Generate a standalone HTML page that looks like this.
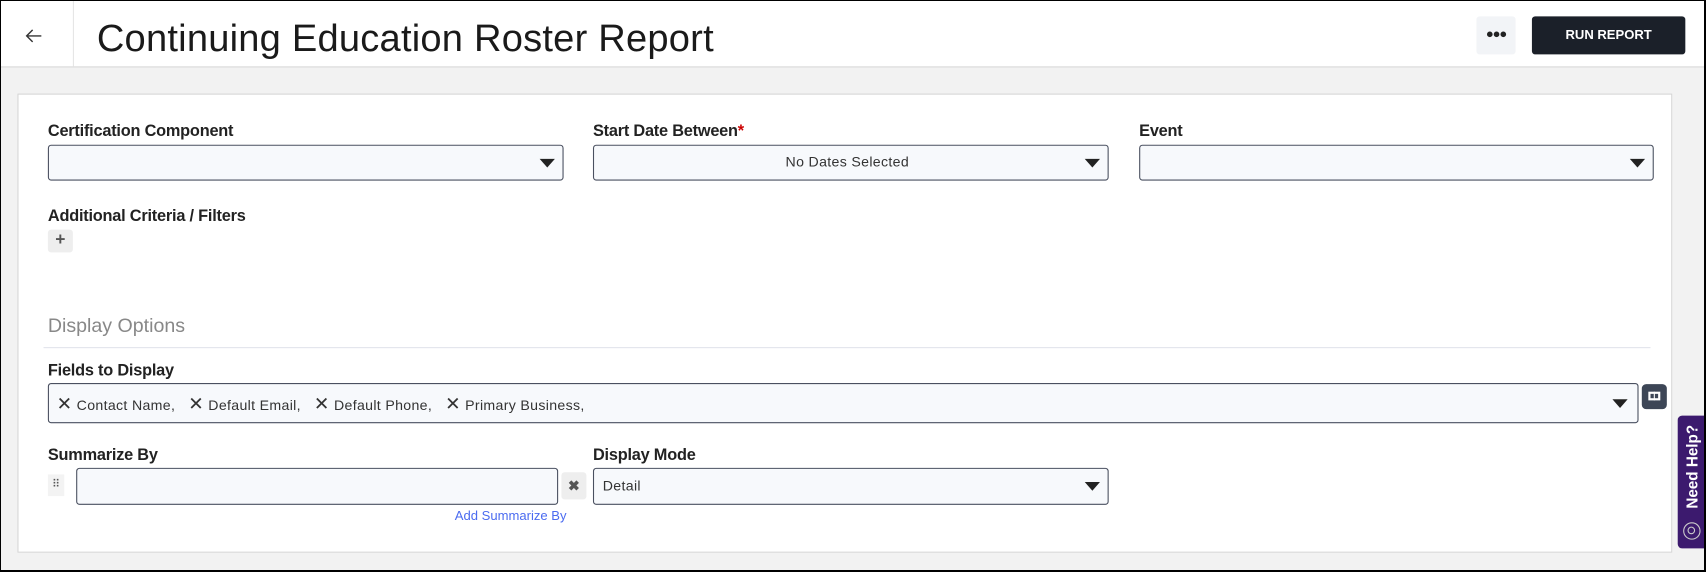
<!DOCTYPE html>
<html><head><style>
*{box-sizing:border-box;margin:0;padding:0}
html,body{width:1706px;height:572px;overflow:hidden}
body{background:#f2f2f2;font-family:"Liberation Sans",sans-serif;position:relative}
#w{position:absolute;left:0;top:0;width:1568px;height:526px;transform:scale(1.08801);transform-origin:0 0}
.a{position:absolute}
.hdr{left:0;top:0;width:1568px;height:62px;background:#fff;border-bottom:1px solid #d8d8d8}
.card{left:16px;top:86px;width:1521px;height:422px;background:#fff;border:1px solid #d6d6d6}
.lbl{font-size:15px;font-weight:bold;color:#222;letter-spacing:-0.2px}
.inp{background:#f7f9fc;border:1px solid #4a5060;border-radius:3px}
.car{width:0;height:0;border-left:7px solid transparent;border-right:7px solid transparent;border-top:8px solid #222}
.t{font-size:13px;color:#333;letter-spacing:0.3px}
.t span{margin-left:8px}
.t span:first-child{margin-left:0}
#bd{position:absolute;left:0;top:0;width:1706px;height:572px;border:1px solid #000;border-width:1px 2px 2px 1px;pointer-events:none}
</style></head><body>
<div id="w">
<div class="a hdr"></div>
<div class="a" style="left:67px;top:0;width:1px;height:61px;background:#e6e6e6"></div>
<svg class="a" style="left:22px;top:24px" width="18" height="18" viewBox="0 0 18 18"><path d="M16 9H3M8 3.5L2.5 9 8 14.5" fill="none" stroke="#333" stroke-width="1.3"/></svg>
<div class="a" style="left:89px;top:16px;font-size:35px;color:#1a1a1a;letter-spacing:0.2px">Continuing Education Roster Report</div>
<div class="a" style="left:1357px;top:15px;width:36px;height:35px;background:#f2f4f7;border-radius:3px;text-align:center;line-height:33px;font-size:12px;color:#222;font-weight:bold;letter-spacing:-1px">●●●</div>
<div class="a" style="left:1408px;top:15px;width:141px;height:35px;background:#1b2029;border-radius:3px;color:#fff;font-size:12px;font-weight:bold;text-align:center;line-height:35px">RUN REPORT</div>
<div class="a card"></div>
<div class="a lbl" style="left:44px;top:112px">Certification Component</div>
<div class="a inp" style="left:44px;top:133px;width:474px;height:33px"></div>
<div class="a car" style="left:496px;top:146px"></div>
<div class="a lbl" style="left:545px;top:112px">Start Date Between<span style="color:#c00">*</span></div>
<div class="a inp" style="left:545px;top:133px;width:474px;height:33px"></div>
<div class="a t" style="left:722px;top:141px">No Dates Selected</div>
<div class="a car" style="left:997px;top:146px"></div>
<div class="a lbl" style="left:1047px;top:112px">Event</div>
<div class="a inp" style="left:1047px;top:133px;width:473px;height:33px"></div>
<div class="a car" style="left:1498px;top:146px"></div>
<div class="a lbl" style="left:44px;top:190px">Additional Criteria / Filters</div>
<div class="a" style="left:44px;top:211px;width:23px;height:21px;background:#eee;border-radius:3px;text-align:center;line-height:20px;font-weight:bold;color:#555;font-size:16px">+</div>
<div class="a" style="left:44px;top:289px;font-size:18px;color:#888">Display Options</div>
<div class="a" style="left:40px;top:319px;width:1477px;height:1px;background:#e2e4ec"></div>
<div class="a lbl" style="left:44px;top:332px">Fields to Display</div>
<div class="a inp" style="left:44px;top:352px;width:1462px;height:37px"></div>
<div class="a t" style="left:52px;top:362px"><span style="font-size:17px">✕</span> Contact Name, <span style="font-size:17px">✕</span> Default Email, <span style="font-size:17px">✕</span> Default Phone, <span style="font-size:17px">✕</span> Primary Business,</div>
<div class="a car" style="left:1482px;top:367px"></div>
<div class="a" style="left:1509px;top:353px;width:23px;height:23px;background:#3d4656;border-radius:4px"><div class="a" style="left:6px;top:7px;width:11px;height:8px;border:2px solid #fff;background:#3d4656"></div><div class="a" style="left:11px;top:7px;width:1px;height:8px;background:#fff"></div></div>
<div class="a lbl" style="left:44px;top:410px">Summarize By</div>
<div class="a" style="left:44px;top:436px;width:15px;height:20px;background:#f3f3f3;color:#555;font-size:10px;text-align:center;line-height:20px">⠿</div>
<div class="a inp" style="left:70px;top:430px;width:443px;height:34px"></div>
<div class="a" style="left:516px;top:434px;width:23px;height:25px;background:#eee;border-radius:3px;text-align:center;line-height:25px;font-size:13px;color:#555;font-weight:bold">✖</div>
<div class="a" style="left:418px;top:467px;font-size:12px;color:#4b6bf0">Add Summarize By</div>
<div class="a lbl" style="left:545px;top:410px">Display Mode</div>
<div class="a inp" style="left:545px;top:430px;width:474px;height:34px"></div>
<div class="a t" style="left:554px;top:439px">Detail</div>
<div class="a car" style="left:997px;top:443px"></div>
<div class="a" style="left:1542px;top:382px;width:26px;height:122px;background:#3c1a6e;border-radius:4px 0 0 4px"></div>
<div class="a" style="left:1542px;top:382px;width:26px;height:95px;"><div style="position:absolute;left:-37px;top:34px;width:100px;height:26px;transform:rotate(-90deg);color:#fff;font-weight:bold;font-size:14px;line-height:26px;text-align:center">Need Help?</div></div>
<div class="a" style="left:1547px;top:480px;width:16px;height:16px;border:1.5px solid #ccc;border-radius:50%"><div style="margin:3px;width:7px;height:7px;border:1.5px solid #ccc;border-radius:50%"></div></div>
</div>
<div id="bd"></div>
</body></html>
